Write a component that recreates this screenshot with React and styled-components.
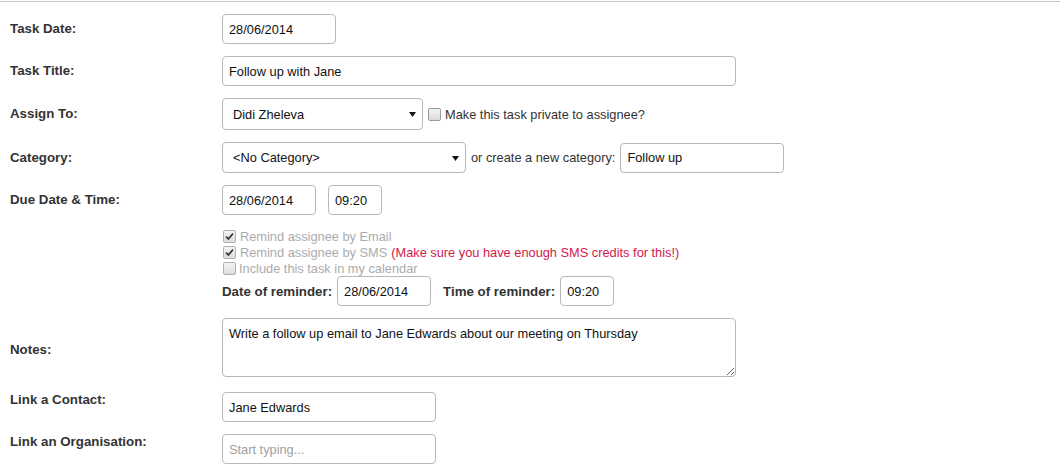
import React from "react";
import styled, { createGlobalStyle } from "styled-components";

const GlobalStyle = createGlobalStyle`
  body {
    margin: 0;
    background: #fff;
    font-family: "Liberation Sans", Arial, sans-serif;
  }
`;

const Page = styled.div`
  width: 1060px;
  margin-top: 1px;
  border-top: 1px solid #c6c6c6;
  padding: 12px 0 0 10px;
  box-sizing: border-box;
`;

const Row = styled.div`
  display: flex;
  align-items: ${(p) => (p.$top ? "flex-start" : "center")};
  margin-bottom: ${(p) => (p.$mb === undefined ? 12 : p.$mb)}px;
`;

const Label = styled.div`
  width: 212px;
  flex-shrink: 0;
  font-size: 13.3px;
  font-weight: bold;
  line-height: 16px;
  color: #333;
  padding-top: ${(p) => p.$pt || 0}px;
`;

const Field = styled.div`
  display: flex;
  align-items: center;
`;

const TextInput = styled.input`
  width: ${(p) => p.$w}px;
  height: 30px;
  margin-left: ${(p) => p.$ml || 0}px;
  box-sizing: border-box;
  border: 1px solid #b8b8b8;
  border-radius: 4px;
  padding: 0 6px;
  font-family: "Liberation Sans", Arial, sans-serif;
  font-size: 12.8px;
  color: #111;
  background: #fff;
  outline: none;
  &::placeholder {
    color: #a0a0a0;
  }
`;

const SelectWrap = styled.div`
  position: relative;
  width: ${(p) => p.$w}px;
  height: ${(p) => p.$h}px;
`;

const Select = styled.select`
  appearance: none;
  width: 100%;
  height: 100%;
  box-sizing: border-box;
  border: 1px solid #b8b8b8;
  border-radius: 4px;
  padding: 0 20px 0 10px;
  font-family: "Liberation Sans", Arial, sans-serif;
  font-size: 12.8px;
  color: #111;
  background: #fff;
  outline: none;
`;

const Arrow = styled.svg`
  position: absolute;
  right: 7px;
  top: 50%;
  margin-top: -2px;
  pointer-events: none;
`;

const Notes = styled.textarea`
  width: 514px;
  height: 59px;
  box-sizing: border-box;
  border: 1px solid #b8b8b8;
  border-radius: 4px;
  padding: 7px 6px;
  font-family: "Liberation Sans", Arial, sans-serif;
  font-size: 12.8px;
  color: #111;
  outline: none;
  resize: both;
`;

const Box = styled.span`
  display: inline-flex;
  align-items: center;
  justify-content: center;
  width: 11px;
  height: 11px;
  border: 1px solid ${(p) => (p.$disabled ? "#b0b0b0" : "#9a9a9a")};
  border-radius: 2px;
  background: linear-gradient(#f4f4f4, #dcdcdc);
  margin-right: ${(p) => p.$mr || 4}px;
  flex-shrink: 0;
`;

const Note = styled.span`
  font-size: 12.8px;
  color: ${(p) => p.$color || "#333"};
  margin: ${(p) => p.$m || "0"};
  white-space: nowrap;
`;

const Indent = styled.div`
  padding-left: 212px;
`;

const CheckLine = styled.div`
  display: flex;
  align-items: center;
  height: 16px;
  padding-left: 1px;
  font-size: 12.8px;
  color: #ababab;
`;

const Warn = styled.span`
  color: #d4174c;
  margin-left: 4px;
`;

const InlineLabel = styled.span`
  font-size: 13.3px;
  font-weight: bold;
  color: #333;
  margin-left: ${(p) => p.$ml || 0}px;
  margin-right: ${(p) => p.$mr || 0}px;
  white-space: nowrap;
`;

const Check = ({ checked, disabled, mr }) => (
  <Box $disabled={disabled} $mr={mr}>
    {checked && (
      <svg width="9" height="9" viewBox="0 0 9 9">
        <path d="M1 4.5 L3.4 7 L8 1.5" fill="none" stroke="#333" strokeWidth="1.8" />
      </svg>
    )}
  </Box>
);

const DropDown = ({ w, h, value }) => (
  <SelectWrap $w={w} $h={h}>
    <Select defaultValue={value}>
      <option>{value}</option>
    </Select>
    <Arrow width="7" height="5" viewBox="0 0 7 5">
      <polygon points="0,0 7,0 3.5,5" fill="#111" />
    </Arrow>
  </SelectWrap>
);

export default function App() {
  return (
    <Page>
      <GlobalStyle />
      <Row>
        <Label>Task Date:</Label>
        <TextInput $w={114} defaultValue="28/06/2014" />
      </Row>
      <Row>
        <Label>Task Title:</Label>
        <TextInput $w={514} defaultValue="Follow up with Jane" />
      </Row>
      <Row>
        <Label>Assign To:</Label>
        <Field>
          <DropDown w={201} h={32} value="Didi Zheleva" />
          <Note $m="0 0 0 5px">
            <Field>
              <Check />
              Make this task private to assignee?
            </Field>
          </Note>
        </Field>
      </Row>
      <Row>
        <Label>Category:</Label>
        <Field>
          <DropDown w={244} h={31} value="<No Category>" />
          <Note $m="0 5px 0 5px">or create a new category:</Note>
          <TextInput $w={164} defaultValue="Follow up" />
        </Field>
      </Row>
      <Row $mb={13}>
        <Label>Due Date &amp; Time:</Label>
        <Field>
          <TextInput $w={94} defaultValue="28/06/2014" />
          <TextInput $w={54} $ml={12} defaultValue="09:20" />
        </Field>
      </Row>
      <Indent>
        <CheckLine>
          <Check checked disabled />
          Remind assignee by Email
        </CheckLine>
        <CheckLine>
          <Check checked disabled />
          Remind assignee by SMS
          <Warn>(Make sure you have enough SMS credits for this!)</Warn>
        </CheckLine>
        <CheckLine>
          <Check disabled mr={3} />
          Include this task in my calendar
        </CheckLine>
      </Indent>
      <Row $mb={12}>
        <Label />
        <Field>
          <InlineLabel $mr={5}>Date of reminder:</InlineLabel>
          <TextInput $w={94} defaultValue="28/06/2014" />
          <InlineLabel $ml={12} $mr={5}>Time of reminder:</InlineLabel>
          <TextInput $w={54} defaultValue="09:20" />
        </Field>
      </Row>
      <Row $mb={15}>
        <Label $pt={5}>Notes:</Label>
        <Notes defaultValue="Write a follow up email to Jane Edwards about our meeting on Thursday" />
      </Row>
      <Row $top $mb={12}>
        <Label>Link a Contact:</Label>
        <TextInput $w={214} defaultValue="Jane Edwards" />
      </Row>
      <Row $top $mb={10}>
        <Label>Link an Organisation:</Label>
        <TextInput $w={214} placeholder="Start typing..." />
      </Row>
    </Page>
  );
}
